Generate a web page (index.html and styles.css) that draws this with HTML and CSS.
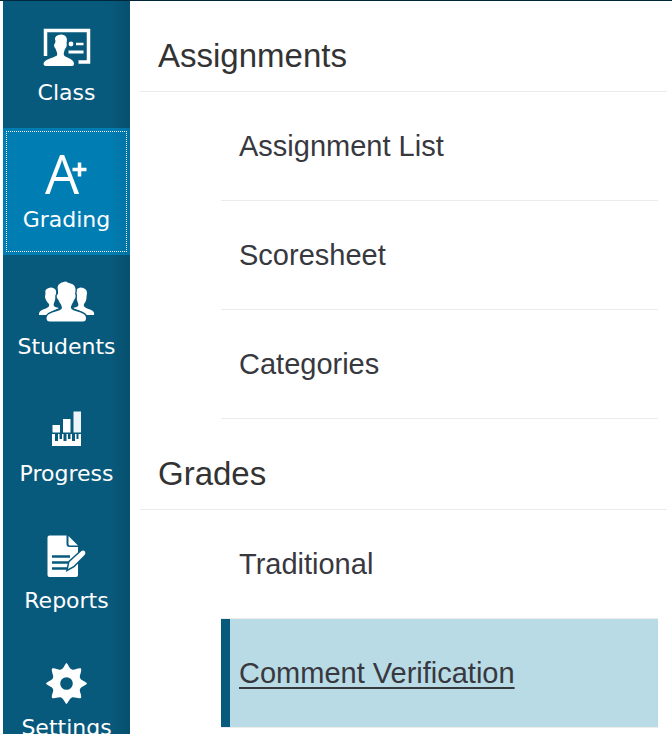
FILE: index.html
```html
<!DOCTYPE html>
<html lang="en">
<head>
  <meta charset="UTF-8" />
  <meta name="viewport" content="width=device-width, initial-scale=1.0"/>
  <title>Grading</title>
  <link rel="stylesheet" href="styles.css">
</head>
<body>
<div class="app">

  <!-- Main navigation -->
  <nav class="sidebar">
    <a href="#" class="nav-item">
      <svg class="icon" viewBox="0 0 63 48">
        <path d="M10.500 32V6.500H53.500V38H43.500" fill="none" stroke="#fff" stroke-width="3.5"/>
        <path d="M20.500 17C18.500 12 23 11 26 10.500C31 11 33 14 31.500 19C32.500 21 31 24 30 25C29 28 28 30 29.500 32C33 34.500 39 35 39 40Q39 42 37 42H11Q8.500 42 8.500 40C8.500 35.500 17 34.500 22 31.500C23 29 21 27 20.500 24.500C19 23 18.500 20 20 19.500Z"/>
        <circle cx="36" cy="20" r="2.4"/>
        <path d="M41 18.800H48.500V21.300H41ZM33.500 26.500H48.500V29.500H33.500Z"/>
      </svg>
      <span class="nav-label">Class</span>
    </a>
    <a href="#" class="nav-item active">
      <svg class="icon" viewBox="0 0 63 48">
        <text class="grade-letter" x="10" y="43">A</text>
        <path d="M37.500 18.500H51.500M44.500 11.500V25.500" stroke="#fff" stroke-width="3.5"/>
      </svg>
      <span class="nav-label">Grading</span>
    </a>
    <a href="#" class="nav-item">
      <svg class="icon" viewBox="0 0 63 48">
        <path d="M10.500 15C9.500 11 13 10 16 9.500C20 10 22 12 21 17Q20 23 19 25C18 28 19 29 24 30L22 31C17 33 13 35 12 37H4Q3.500 33 8 31.500C12 30 15 29 14 26C11.500 24 10.500 21 10 19Z"/>
        <path d="M52 15C52 11 49 10 46 9.500C42 10 40 12 41 17Q42 23 43 25C44 28 43 29 38 30L40 31C46 33 49 35 51 37H59Q60 33 55 31.500C51 30 48 29 49 26C51 24 51.500 21 51.500 19Z"/>
        <path class="front" d="M23 12C21 6 27 4 31 3.500C33 5 35 5 37 6C41 8 41 12 40 16C41.500 18 40 21 39 22C37.500 26 35 28 36.500 31C41 34.500 51 34 51 40Q51 43.500 48 43.500H15Q11.500 43.500 11.500 40C12 34 22 34.500 26.500 31C28 28 25 26 23.500 22C21.500 20 21 17 23 16Z"/>
      </svg>
      <span class="nav-label">Students</span>
    </a>
    <a href="#" class="nav-item">
      <svg class="icon" viewBox="0 0 63 48">
        <path d="M17.500 20H25V27.500H17.500ZM28 14H35.500V27.500H28Z"/>
        <path d="M38.500 6.500H46V27.500H38.500Z" fill="#edf3f7"/>
        <path d="M17 29H20V36H23V29H24.500V34H27V29H28.500V36H31.500V29H33V34H35.500V29H37V36H40V29H41.500V34H43.500V29H46V41H17Z"/>
      </svg>
      <span class="nav-label">Progress</span>
    </a>
    <a href="#" class="nav-item">
      <svg class="icon" viewBox="0 0 63 48">
        <path d="M14.500 3.500H31.500V12Q31.500 15 34.500 15H43V43Q43 45 41 45H14.500Q12.500 45 12.500 43V5.500Q12.500 3.500 14.500 3.500ZM33.500 4L43 13.500H35Q33.500 13.500 33.500 12Z"/>
        <path class="cut" d="M17 24.500H35M17 30.500H33M17 36.500H33"/>
        <path class="front" d="M33 37L34.500 30L46 19.500Q48 17.500 50 19.500Q51 21.500 49.500 23L38.500 34Z"/>
      </svg>
      <span class="nav-label">Reports</span>
    </a>
    <a href="#" class="nav-item">
      <svg class="icon" viewBox="0 0 63 48">
        <path fill-rule="evenodd" d="M31.500 4C33 5 34.500 10 37 10.500C39.500 11.500 43 8.500 46 9.500C47 12.500 44 16.500 45 19C46 21.500 51 22.500 52 24.500C51 26.500 46 27.500 45 30C44 32.500 47 36 46 39C43 40 39.500 37.500 37 38.500C34.500 39.500 33 44 31.500 45C30 44 28.500 39.500 26 38.500C23.500 37.500 20 40 17 39C16 36 19 32.500 18 30C17 27.500 12 26.500 11 24.500C12 22.500 17 21.500 18 19C19 16.500 16 12.500 17 9.500C20 8.500 23.500 11.500 26 10.500C28.500 10 30 5 31.500 4ZM31.500 18.200A6.300 6.300 0 1 0 31.500 30.800A6.300 6.300 0 1 0 31.500 18.200Z"/>
      </svg>
      <span class="nav-label">Settings</span>
    </a>
  </nav>

  <!-- Grading menu -->
  <main class="menu">
    <section>
      <h2 class="menu-title">Assignments</h2>
      <ul class="menu-list">
        <li><a href="#">Assignment List</a></li>
        <li><a href="#">Scoresheet</a></li>
        <li><a href="#">Categories</a></li>
      </ul>
    </section>
    <section>
      <h2 class="menu-title">Grades</h2>
      <ul class="menu-list">
        <li><a href="#">Traditional</a></li>
        <li><a href="#" class="selected">Comment Verification</a></li>
      </ul>
    </section>
  </main>

</div>
</body>
</html>
```
FILE: styles.css
```css
* {
  box-sizing: border-box;
}

body {
  margin: 0;
  background: #fff;
  font-family: "Liberation Sans", Arial, sans-serif;
  color: #333;
}

.app {
  display: flex;
  height: 100vh;
  overflow: hidden;
  border-top: 1px solid #00263a;
  padding-left: 3px;
}

/* Sidebar */
.sidebar {
  flex: none;
  width: 127px;
  background: #085a7d;
  background-image: linear-gradient(to left, #07506e, #085a7d 22px);
}

.nav-item {
  display: flex;
  flex-direction: column;
  align-items: center;
  gap: 6px;
  height: 127px;
  padding-top: 23px;
  color: #fff;
  text-decoration: none;
}

.nav-item.active {
  background: linear-gradient(to left, #0072a4, #007eb4 22px);
  outline: 1px dotted #fff;
  outline-offset: -4px;
}

.nav-label {
  font-family: Verdana, "DejaVu Sans", sans-serif;
  font-size: 22px;
  line-height: 30px;
}

.icon {
  flex: none;
  width: 63px;
  height: 48px;
  fill: #fff;
  overflow: visible;
}

.icon .front {
  stroke: #085a7d;
  stroke-width: 3;
  paint-order: stroke;
}

.icon .cut {
  stroke: #085a7d;
  stroke-width: 2.5;
}

.grade-letter {
  font-family: "Open Sans", sans-serif;
  font-size: 54px;
}

/* Menu */
.menu {
  flex: 1;
  padding: 0 5px 0 10px;
}

.menu-title {
  margin: 0;
  padding: 37px 18px 17px;
  border-bottom: 1px solid #ebebeb;
  font-size: 33px;
  font-weight: normal;
  line-height: 36px;
}

.menu-list {
  list-style: none;
  margin: 0;
  padding: 0 9px 0 81px;
}

.menu-list li {
  border-bottom: 1px solid #ebebeb;
}

.menu-list a {
  display: block;
  padding: 0 9px;
  border-left: 9px solid transparent;
  color: #38383f;
  font-size: 29px;
  line-height: 108px;
  text-decoration: none;
}

.menu-list a.selected {
  border-left-color: #085a7d;
  background: #b8dbe6;
  text-decoration: underline;
  text-decoration-thickness: 2px;
  text-underline-offset: 4px;
}
```
